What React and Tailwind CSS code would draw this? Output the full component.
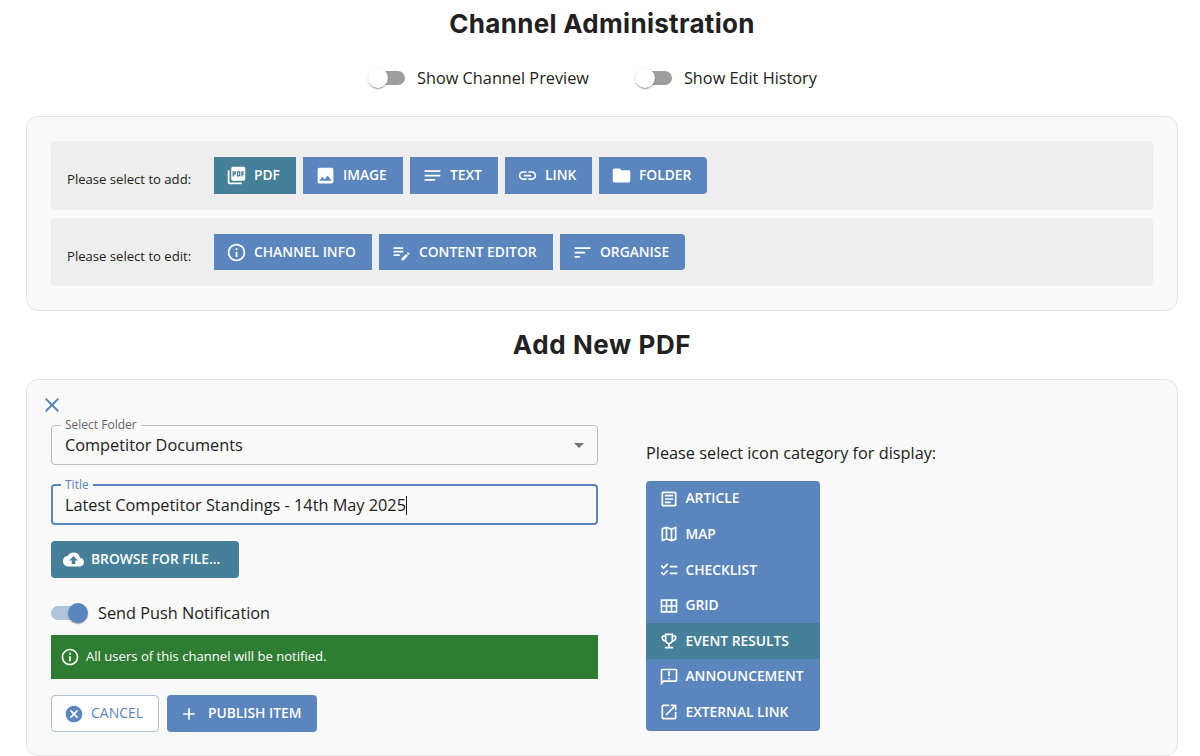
import React from 'react';
import {
  MdPictureAsPdf, MdImage, MdNotes, MdLink, MdFolder, MdInfoOutline, MdEditNote, MdSort,
  MdClose, MdArrowDropDown, MdCloudUpload, MdCancel, MdAdd, MdOutlineArticle, MdOutlineMap,
  MdOutlineChecklist, MdOutlineEmojiEvents, MdOutlineAnnouncement, MdOutlineOpenInNew,
} from 'react-icons/md';

const GridIcon = ({ className }) => (
  <svg viewBox="0 0 24 24" fill="none" stroke="currentColor" strokeWidth="2" className={className}>
    <path d="M3 5h18v14H3z M9 5v14 M15 5v14 M3 12h18" />
  </svg>
);

const Switch = ({ on }) => (
  <div className="relative h-[14px] w-[34px] shrink-0">
    <div className={on ? 'h-full w-full rounded-full bg-[#adc3de]' : 'h-full w-full rounded-full bg-[#9e9e9e]'} />
    <div
      className={
        on
          ? 'absolute -top-[3px] right-[-3px] h-5 w-5 rounded-full bg-[#5b85bd] shadow-[0_2px_1px_-1px_rgba(0,0,0,0.2),0_1px_1px_0_rgba(0,0,0,0.14),0_1px_3px_0_rgba(0,0,0,0.12)]'
          : 'absolute -top-[3px] left-[-3px] h-5 w-5 rounded-full bg-white shadow-[0_2px_1px_-1px_rgba(0,0,0,0.2),0_1px_1px_0_rgba(0,0,0,0.14),0_1px_3px_0_rgba(0,0,0,0.12)]'
      }
    />
  </div>
);

const ToolButton = ({ icon: Icon, label, active, last, width, tall }) => (
  <button
    className={`flex items-center gap-[7px] pl-[12px] text-[13.8px] leading-none font-semibold text-white ${tall ? 'h-[37px]' : 'h-9'} ${width} ${active ? 'bg-[#457f98]' : 'bg-[#5b85bd]'} ${last ? 'rounded-r' : ''}`}
  >
    <Icon className="h-[21px] w-[21px] shrink-0" />
    <span className="-mt-[1px]">{label}</span>
  </button>
);

const categories = [
  { icon: MdOutlineArticle, label: 'ARTICLE' },
  { icon: MdOutlineMap, label: 'MAP' },
  { icon: MdOutlineChecklist, label: 'CHECKLIST' },
  { icon: GridIcon, label: 'GRID' },
  { icon: MdOutlineEmojiEvents, label: 'EVENT RESULTS', active: true },
  { icon: MdOutlineAnnouncement, label: 'ANNOUNCEMENT' },
  { icon: MdOutlineOpenInNew, label: 'EXTERNAL LINK' },
];

export default function App() {
  return (
    <div className="h-[756px] overflow-hidden bg-white pl-[26px] pr-[22px] font-['Open_Sans',sans-serif] text-[#212121]">
      <h1 className="flex h-[48px] items-center justify-center pb-[1px] font-['Inter',sans-serif] text-[26px] font-bold tracking-[0.3px]">
        Channel Administration
      </h1>

      {/* toggles */}
      <div className="mt-[6px] flex h-[48px] items-center justify-center gap-[49px] pr-[16px]">
        <div className="flex items-center gap-[12px] text-[16.3px]">
          <Switch />
          <span>Show Channel Preview</span>
        </div>
        <div className="flex items-center gap-[12px] text-[16.3px]">
          <Switch />
          <span>Show Edit History</span>
        </div>
      </div>

      {/* selector card */}
      <div className="mt-[14px] h-[195px] rounded-xl border border-[#e4e4e4] bg-[#f9f9f9] px-6 pt-6">
        <div className="flex h-[69px] items-start gap-[23px] rounded bg-[#eeeeee] px-4 pt-4">
          <span className="mt-[13px] w-[124px] text-[13.1px] leading-[18px] whitespace-nowrap">Please select to add:</span>
          <div className="flex gap-[7px]">
            <ToolButton icon={MdPictureAsPdf} label="PDF" active tall width="w-[82px]" />
            <ToolButton icon={MdImage} label="IMAGE" tall width="w-[100px]" />
            <ToolButton icon={MdNotes} label="TEXT" tall width="w-[88px]" />
            <ToolButton icon={MdLink} label="LINK" tall width="w-[87px]" />
            <ToolButton icon={MdFolder} label="FOLDER" last tall width="w-[108px]" />
          </div>
        </div>
        <div className="mt-2 flex h-[68px] items-start gap-[23px] rounded bg-[#eeeeee] px-4 pt-4">
          <span className="mt-[13px] w-[124px] text-[13.1px] leading-[18px] whitespace-nowrap">Please select to edit:</span>
          <div className="flex gap-[7px]">
            <ToolButton icon={MdInfoOutline} label="CHANNEL INFO" width="w-[158px]" />
            <ToolButton icon={MdEditNote} label="CONTENT EDITOR" width="w-[174px]" />
            <ToolButton icon={MdSort} label="ORGANISE" last width="w-[125px]" />
          </div>
        </div>
      </div>

      <h2 className="flex h-[68px] items-center justify-center pb-[2px] font-['Inter',sans-serif] text-[26px] font-bold tracking-[0.6px]">
        Add New PDF
      </h2>

      {/* form card */}
      <div className="h-[377px] rounded-xl border border-[#e4e4e4] bg-[#f9f9f9] px-6 pt-[13px]">
        <MdClose className="-ml-[11px] h-[24px] w-[24px] text-[#5b85bd]" />
        <div className="flex gap-[48px]">
          <div className="w-[547px]">
            <fieldset className="mt-[3px] h-[45px] rounded border border-[#bdbdbd] px-[9px]">
              <legend className="px-[4px] text-[12px] leading-[10px] text-[#666666]">Select Folder</legend>
              <div className="flex items-center justify-between pl-[4px]">
                <span className="text-[16.3px] leading-[30px]">Competitor Documents</span>
                <MdArrowDropDown className="-mr-[3px] h-6 w-6 text-[#757575]" />
              </div>
            </fieldset>
            <fieldset className="mt-[15px] h-[45px] rounded border-2 border-[#5b85bd] px-[8px]">
              <legend className="px-[4px] text-[12px] leading-[10px] text-[#5b85bd]">Title</legend>
              <div className="flex items-center pl-[4px]">
                <span className="text-[16.3px] leading-[30px]">Latest Competitor Standings - 14th May 2025</span>
                <span className="h-[19px] w-px bg-[#212121]" />
              </div>
            </fieldset>
            <button className="mt-[16px] flex h-[37px] w-[188px] items-center gap-[7px] rounded bg-[#457f98] pl-[12px] text-[13.8px] leading-none font-semibold text-white">
              <MdCloudUpload className="h-[21px] w-[21px] shrink-0" />
              <span className="-mt-[1px]">BROWSE FOR FILE...</span>
            </button>
            <div className="mt-[24px] flex h-[22px] items-center gap-[13px] text-[16.3px]">
              <Switch on />
              <span>Send Push Notification</span>
            </div>
            <div className="mt-[11px] flex h-[44px] items-center gap-[6px] bg-[#2e7d32] pl-[9px] text-[13.1px] text-white">
              <MdInfoOutline className="h-[20px] w-[20px] shrink-0" />
              <span className="-mt-[1px]">All users of this channel will be notified.</span>
            </div>
            <div className="mt-[16px] flex gap-2">
              <button className="flex h-[37px] w-[108px] items-center gap-[7px] rounded border border-[#adc3de] bg-white pl-[12px] text-[14px] leading-none font-medium text-[#5b85bd]">
                <MdCancel className="h-5 w-5 shrink-0" />
                <span className="-mt-[1px]">CANCEL</span>
              </button>
              <button className="flex h-[37px] w-[150px] items-center gap-[9px] rounded bg-[#5b85bd] pl-[12px] text-[13.8px] leading-none font-semibold text-white">
                <MdAdd className="h-5 w-5 shrink-0" />
                <span className="-mt-[1px]">PUBLISH ITEM</span>
              </button>
            </div>
          </div>

          {/* icon category list */}
          <div className="-mt-[5px] pt-[29px]">
            <p className="text-[16.3px] leading-[24px] whitespace-nowrap">Please select icon category for display:</p>
            <ul className="mt-[16px] w-[174px] overflow-hidden rounded bg-[#5b85bd] pb-[0.5px]">
              {categories.map((c) => (
                <li
                  key={c.label}
                  className={`flex h-[35.6px] items-center gap-[6.5px] pl-[13px] text-[13.8px] font-semibold text-white ${c.active ? 'bg-[#457f98]' : ''}`}
                >
                  <c.icon className="h-[20px] w-[20px] shrink-0" />
                  <span>{c.label}</span>
                </li>
              ))}
            </ul>
          </div>
        </div>
      </div>
    </div>
  );
}
